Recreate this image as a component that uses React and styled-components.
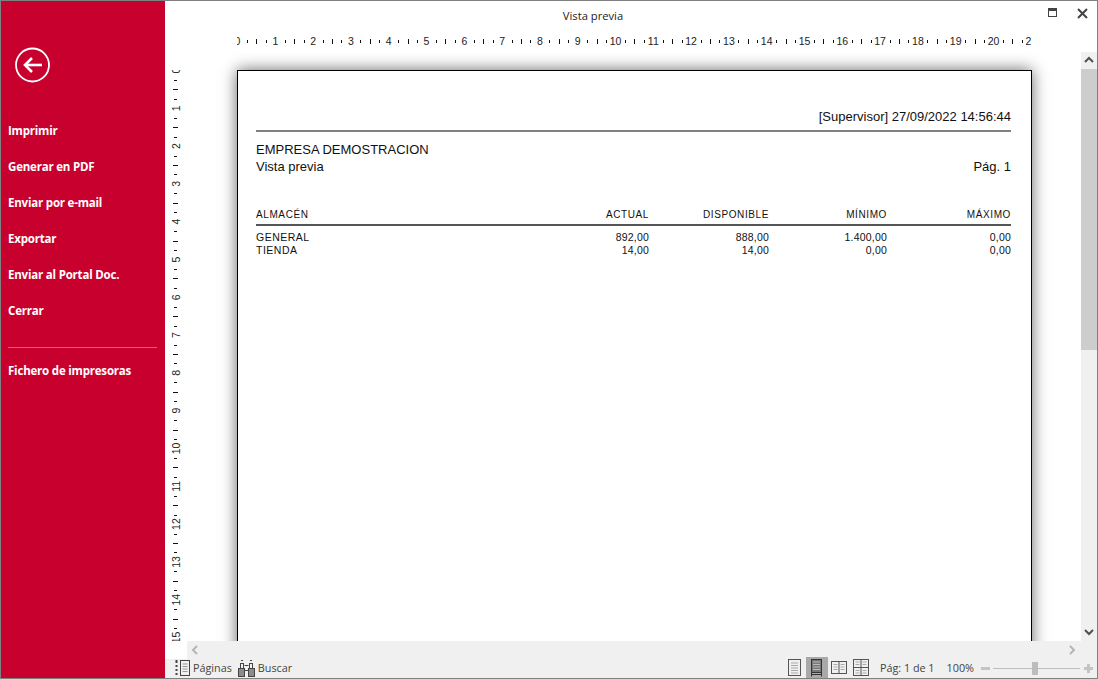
import styled, { createGlobalStyle } from "styled-components";

const CM = 37.8;

const menuTop = ["Imprimir", "Generar en PDF", "Enviar por e-mail", "Exportar", "Enviar al Portal Doc.", "Cerrar"];

const columns = [
  { label: "ACTUAL", general: "892,00", tienda: "14,00" },
  { label: "DISPONIBLE", general: "888,00", tienda: "14,00" },
  { label: "MÍNIMO", general: "1.400,00", tienda: "0,00" },
  { label: "MÁXIMO", general: "0,00", tienda: "0,00" },
];

const HorizontalRuler = () => {
  const marks = [];
  for (let i = 0; i <= 84; i++) {
    const x = 0.5 + (i * CM) / 4;
    if (i % 4 === 0) {
      marks.push(
        <text key={i} x={x} y={45} fontSize="10.5" textAnchor="middle" fontFamily="Liberation Sans, sans-serif" fill="#222">
          {i / 4}
        </text>
      );
    } else {
      const long = i % 4 === 2;
      marks.push(<rect key={i} x={Math.round(x)} y={long ? 39 : 40} width="1" height={long ? 5 : 3} fill="#111" />);
    }
  }
  return (
    <svg width="794" height="22" viewBox="0 30 794 22">
      {marks}
    </svg>
  );
};

const VerticalRuler = () => {
  const marks = [];
  for (let i = 0; i < 63; i++) {
    const y = 0.5 + (i * CM) / 4;
    if (i % 4 === 0) {
      marks.push(
        <text
          key={i}
          x={0}
          y={0}
          fontSize="10.5"
          textAnchor="middle"
          fontFamily="Liberation Sans, sans-serif"
          fill="#222"
          transform={`translate(15 ${y}) rotate(-90)`}
        >
          {i / 4}
        </text>
      );
    } else {
      const long = i % 4 === 2;
      marks.push(<rect key={i} x={long ? 8 : 9} y={Math.round(y)} width={long ? 5 : 3} height="1" fill="#111" />);
    }
  }
  return (
    <svg width="22" height="571" viewBox="0 0 22 571">
      {marks}
    </svg>
  );
};

const BackIcon = () => (
  <svg width="36" height="36" viewBox="0 0 36 36" fill="none" stroke="#fff">
    <circle cx="17.500" cy="18" r="16.500" strokeWidth="1.800" />
    <path d="M10 18h17" strokeWidth="2.600" />
    <path d="M17 11 10 18l7 7" strokeWidth="2.600" />
  </svg>
);

const MaximizeIcon = () => (
  <svg width="10" height="10" viewBox="0 0 10 10" fill="none" stroke="#444">
    <rect x="0.5" y="0.5" width="8" height="8" />
    <rect x="0" y="0" width="9" height="3" fill="#444" stroke="none" />
  </svg>
);

const CloseIcon = () => (
  <svg width="11" height="11" viewBox="0 0 11 11" stroke="#444" strokeWidth="2">
    <path d="M1 1l9 9M10 1l-9 9" />
  </svg>
);

const Chevron = ({ dir, color = "#505050" }) => {
  const d = {
    up: "M1 6l4-4 4 4",
    down: "M1 2l4 4 4-4",
    left: "M6 1L2 5l4 4",
    right: "M2 1l4 4-4 4",
  }[dir];
  return (
    <svg width="10" height="10" viewBox="0 0 10 10" fill="none" stroke={color} strokeWidth="2">
      <path d={d} />
    </svg>
  );
};

const PagesIcon = () => (
  <svg width="15" height="17" viewBox="0 0 15 17" fill="none" stroke="#444">
    <path d="M1.500 0v3M1.500 5v2M1.500 9v2M1.500 13v2" strokeWidth="2" />
    <rect x="5.500" y="0.500" width="9" height="15" />
    <path d="M7.500 4h5M7.500 6.500h5M7.500 9h5M7.500 11.500h5" stroke="#999" />
  </svg>
);

const BinocularsIcon = () => (
  <svg width="17" height="17" viewBox="0 0 17 17" fill="none" stroke="#444">
    <rect x="0.5" y="8.5" width="6" height="8" fill="#8c8c8c" />
    <rect x="10.5" y="8.5" width="6" height="8" fill="#8c8c8c" />
    <rect x="2.5" y="3.5" width="3" height="5" />
    <rect x="11.5" y="3.5" width="3" height="5" />
    <path d="M3 .5h2M12 .5h2M6.5 5.5h4M6.5 10.5h4" />
  </svg>
);

const ViewIcon = ({ kind }) => {
  if (kind === "single") {
    return (
      <svg width="13" height="17" viewBox="0 0 13 17" fill="none" stroke="#555">
        <rect x="0.5" y="0.5" width="12" height="16" />
        <path d="M3 4h7M3 6.500h7M3 9h7M3 11.500h7M3 14h7" stroke="#aaa" />
      </svg>
    );
  }
  if (kind === "fit") {
    return (
      <svg width="11" height="18" viewBox="0 0 11 18" fill="none" stroke="#333">
        <rect x="0.5" y="0.5" width="10" height="13" fill="#777" />
        <path d="M2 3h7M2 5.500h7M2 8h7M2 10.500h7" stroke="#bbb" />
        <path d="M0.500 14v3.500M10.500 14v3.500M0 15.500h11" />
      </svg>
    );
  }
  if (kind === "double") {
    return (
      <svg width="16" height="13" viewBox="0 0 16 13" fill="none" stroke="#555">
        <rect x="0.5" y="0.5" width="15" height="12" />
        <path d="M8 0v13" />
        <path d="M2.500 3.500h4M2.500 6h4M2.500 8.500h4M9.500 3.500h4M9.500 6h4M9.500 8.500h4" stroke="#aaa" />
      </svg>
    );
  }
  return (
    <svg width="16" height="17" viewBox="0 0 16 17" fill="none" stroke="#555">
      <rect x="0.5" y="0.5" width="15" height="16" />
      <path d="M8 0v17M0 8.500h16" />
      <path d="M2.500 3h4M2.500 5.500h4M9.500 3h4M9.500 5.500h4M2.500 11.500h4M2.500 14h4M9.500 11.500h4M9.500 14h4" stroke="#aaa" />
    </svg>
  );
};

const App = () => (
  <>
    <GlobalStyle />
    <Window>
      <Sidebar>
        <BackButton>
          <BackIcon />
        </BackButton>
        <MenuList>
          {menuTop.map((item) => (
            <MenuItem key={item}>{item}</MenuItem>
          ))}
        </MenuList>
        <MenuDivider />
        <MenuItem>Fichero de impresoras</MenuItem>
      </Sidebar>

      <Main>
        <TitleBar>
          <Title>Vista previa</Title>
          <WindowControls>
            <MaximizeIcon />
            <CloseIcon />
          </WindowControls>
        </TitleBar>

        <TopRulerRow>
          <HorizontalRuler />
        </TopRulerRow>

        <Body>
          <SideRuler>
            <VerticalRuler />
          </SideRuler>
          <Canvas>
            <Page>
              <UserLine>[Supervisor] 27/09/2022 14:56:44</UserLine>
              <HeaderRule />
              <Company>EMPRESA DEMOSTRACION</Company>
              <SubtitleRow>
                <span>Vista previa</span>
                <span>Pág. 1</span>
              </SubtitleRow>
              <TableHead>
                <span>ALMACÉN</span>
                {columns.map((c) => (
                  <HeadCell key={c.label}>{c.label}</HeadCell>
                ))}
              </TableHead>
              <TableRow>
                <span>GENERAL</span>
                {columns.map((c) => (
                  <NumCell key={c.label}>{c.general}</NumCell>
                ))}
              </TableRow>
              <TableRow>
                <span>TIENDA</span>
                {columns.map((c) => (
                  <NumCell key={c.label}>{c.tienda}</NumCell>
                ))}
              </TableRow>
            </Page>
          </Canvas>
          <VScroll>
            <ScrollButton>
              <Chevron dir="up" />
            </ScrollButton>
            <VThumb />
            <ScrollButton>
              <Chevron dir="down" />
            </ScrollButton>
          </VScroll>
        </Body>

        <HScrollRow>
          <HScroll>
            <Chevron dir="left" color="#b5b5b5" />
            <Chevron dir="right" color="#b5b5b5" />
          </HScroll>
        </HScrollRow>

        <StatusBar>
          <StatusGroup>
            <StatusTool>
              <PagesIcon />
              <StatusText>Páginas</StatusText>
            </StatusTool>
            <StatusTool>
              <BinocularsIcon />
              <StatusText>Buscar</StatusText>
            </StatusTool>
          </StatusGroup>
          <StatusGroup>
            <ViewButton>
              <ViewIcon kind="single" />
            </ViewButton>
            <ViewButton $active>
              <ViewIcon kind="fit" />
            </ViewButton>
            <ViewButton>
              <ViewIcon kind="double" />
            </ViewButton>
            <ViewButton>
              <ViewIcon kind="quad" />
            </ViewButton>
            <PageInfo>Pág: 1 de 1</PageInfo>
            <ZoomValue>100%</ZoomValue>
            <ZoomSign />
            <ZoomTrack>
              <ZoomThumb />
            </ZoomTrack>
            <ZoomSign $plus />
          </StatusGroup>
        </StatusBar>
      </Main>
    </Window>
  </>
);

const GlobalStyle = createGlobalStyle`
  html, body {
    margin: 0;
    padding: 0;
    background: #fff;
  }
  * {
    box-sizing: border-box;
  }
`;

const Window = styled.div`
  width: 1098px;
  height: 679px;
  border: 1px solid #808080;
  display: flex;
  overflow: hidden;
  background: #fff;
  font-family: "Open Sans", sans-serif;
`;

const Sidebar = styled.div`
  width: 164px;
  flex-shrink: 0;
  background: #c8002d;
  display: flex;
  flex-direction: column;
  padding: 46px 7px 0;
`;

const BackButton = styled.div`
  height: 36px;
  margin: 0 0 33px 7px;
`;

const MenuList = styled.div`
  display: flex;
  flex-direction: column;
`;

const MenuItem = styled.div`
  height: 36px;
  line-height: 30px;
  color: #fff;
  font-size: 11.5px;
  font-weight: 700;
  white-space: nowrap;
  letter-spacing: -0.2px;
`;

const MenuDivider = styled.div`
  height: 1px;
  background: #dc5f7c;
  margin: 15px 1px 8px 0;
`;

const Main = styled.div`
  flex: 1;
  min-width: 0;
  display: flex;
  flex-direction: column;
`;

const TitleBar = styled.div`
  height: 29px;
  display: flex;
  align-items: center;
  flex-shrink: 0;
`;

const Title = styled.div`
  flex: 1;
  text-align: center;
  font-size: 11.2px;
  color: #222;
`;

const WindowControls = styled.div`
  width: 76px;
  height: 100%;
  display: flex;
  gap: 19px;
  padding: 7px 0 0 27px;
  align-items: flex-start;
`;

const TopRulerRow = styled.div`
  height: 22px;
  flex-shrink: 0;
  padding-left: 72px;
  overflow: hidden;

  svg {
    display: block;
  }
`;

const Body = styled.div`
  flex: 1;
  min-height: 0;
  display: flex;
`;

const SideRuler = styled.div`
  width: 22px;
  flex-shrink: 0;
  padding-top: 18px;
  overflow: hidden;

  svg {
    display: block;
  }
`;

const Canvas = styled.div`
  flex: 1;
  min-width: 0;
  overflow: hidden;
  padding: 18px 0 0 50px;
`;

const Page = styled.div`
  width: 795px;
  height: 800px;
  border: 1px solid #000;
  box-shadow: 0 0 15px rgba(0, 0, 0, 0.6);
  background: #fff;
  padding: 38px 20px 0 18px;
  font-family: "Liberation Sans", Arial, sans-serif;
  color: #111;
`;

const UserLine = styled.div`
  font-size: 13px;
  line-height: 15px;
  text-align: right;
`;

const HeaderRule = styled.div`
  height: 2px;
  background: #808080;
  margin-top: 6px;
`;

const Company = styled.div`
  font-size: 13px;
  line-height: 15px;
  margin-top: 10px;
`;

const SubtitleRow = styled.div`
  display: flex;
  justify-content: space-between;
  font-size: 13px;
  line-height: 15px;
  margin-top: 2px;
`;

const TableHead = styled.div`
  display: grid;
  grid-template-columns: 1fr 60px 120px 118px 124px;
  font-size: 10px;
  line-height: 13px;
  letter-spacing: 0.6px;
  margin-top: 34px;
  padding-bottom: 3px;
  border-bottom: 2px solid #555;
  margin-bottom: 5px;
`;

const HeadCell = styled.span`
  text-align: right;
`;

const TableRow = styled.div`
  display: grid;
  grid-template-columns: 1fr 60px 120px 118px 124px;
  font-size: 10.5px;
  line-height: 13px;
  letter-spacing: 0.5px;
`;

const NumCell = styled.span`
  text-align: right;
  letter-spacing: 0.2px;
`;

const VScroll = styled.div`
  width: 16px;
  flex-shrink: 0;
  background: #f0f0f0;
  display: flex;
  flex-direction: column;
  justify-content: flex-start;

  & > :last-child {
    margin-top: auto;
  }
`;

const ScrollButton = styled.div`
  height: 17px;
  display: flex;
  align-items: center;
  justify-content: center;
  flex-shrink: 0;
`;

const VThumb = styled.div`
  height: 281px;
  background: #cdcdcd;
`;

const HScrollRow = styled.div`
  height: 18px;
  flex-shrink: 0;
  padding-left: 22px;
`;

const HScroll = styled.div`
  height: 100%;
  background: #f0f0f0;
  display: flex;
  align-items: center;
  justify-content: space-between;
  padding: 0 19px 0 4px;
`;

const StatusBar = styled.div`
  height: 19px;
  flex-shrink: 0;
  background: #f0f0f0;
  display: flex;
  justify-content: space-between;
  align-items: center;
  font-size: 10.8px;
  color: #444;
  padding: 0 4px 0 10px;
`;

const StatusGroup = styled.div`
  display: flex;
  align-items: center;
  height: 100%;
`;

const StatusTool = styled.div`
  display: flex;
  align-items: center;
  gap: 3px;
  margin-right: 6px;
`;

const StatusText = styled.span`
  margin-top: -3px;
`;

const ViewButton = styled.div`
  width: 22px;
  height: 21px;
  margin-top: -2px;
  display: flex;
  align-items: center;
  justify-content: center;
  background: ${({ $active }) => ($active ? "#a9a9a9" : "transparent")};
`;

const PageInfo = styled(StatusText)`
  margin-left: 8px;
`;

const ZoomValue = styled(StatusText)`
  margin-left: 12px;
  margin-right: 7px;
`;

const ZoomSign = styled.div`
  width: 9px;
  height: 9px;
  position: relative;
  flex-shrink: 0;

  &::before {
    content: "";
    position: absolute;
    left: 0;
    right: 0;
    top: 3px;
    height: 3px;
    background: #c4c4c4;
  }

  &::after {
    content: "";
    display: ${({ $plus }) => ($plus ? "block" : "none")};
    position: absolute;
    top: 0;
    bottom: 0;
    left: 3px;
    width: 3px;
    background: #c4c4c4;
  }
`;

const ZoomTrack = styled.div`
  width: 87px;
  height: 1px;
  margin: 0 4px 0 3px;
  background: #bdbdbd;
  position: relative;
`;

const ZoomThumb = styled.div`
  position: absolute;
  left: 39px;
  top: -6px;
  width: 6px;
  height: 13px;
  background: #bdbdbd;
`;

export default App;
